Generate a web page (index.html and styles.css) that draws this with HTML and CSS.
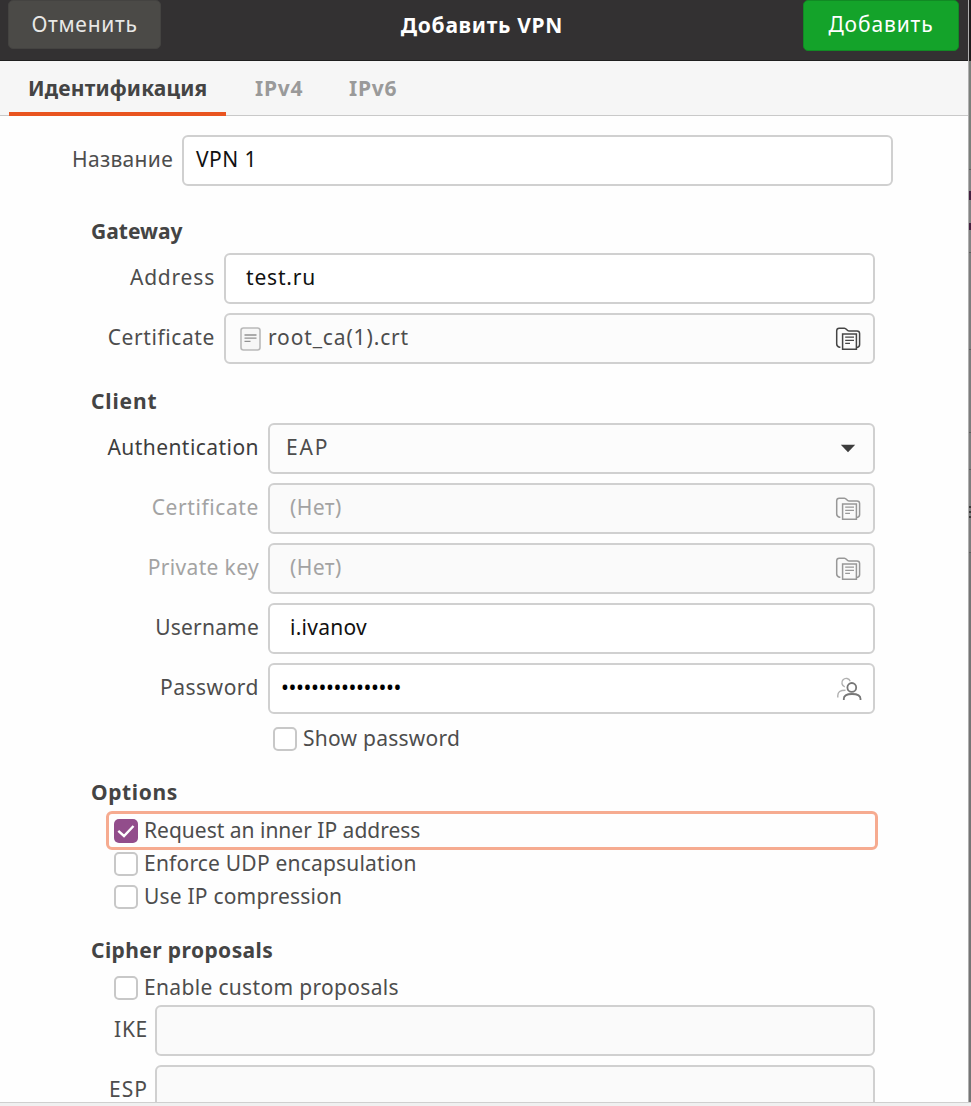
FILE: index.html
```html
<!DOCTYPE html>
<html lang="ru">
<head>
<meta charset="utf-8">
<title>Добавить VPN</title>
<link rel="stylesheet" href="styles.css">
</head>
<body>
<svg class="defs" width="0" height="0">
  <symbol id="folder" viewBox="0 0 26 26" fill="none" stroke="currentColor">
    <path d="M5.4 21.2H4.6C2.6 20.8 1.7 20 1.7 18V4.8C1.7 3 2.6 2.2 4.2 2.2H9.4C11.6 2.2 11.6 5 14 5H22C23.8 5 24.6 5.9 24.6 7.6V18.6C24.6 20.6 23.6 21.4 22 21.6" stroke-width="1.5"/>
    <path d="M7.6 7.9H21.4V23.3H7.6Z" stroke-width="1.5"/>
    <path d="M10.2 11.2H19M10.2 14.3H19M10.2 17.4H15" stroke-width="1.3"/>
  </symbol>
</svg>
<div class="screen">
  <div class="top">
    <div class="dialog">
      <header class="header">
        <div class="btn cancel"><span class="t t-cancel">Отменить</span></div>
        <div class="title"><span class="t b t-title">Добавить VPN</span></div>
        <div class="btn add"><span class="t t-add">Добавить</span></div>
      </header>
      <nav class="tabs">
        <div class="tab active"><span class="t b t-ident">Идентификация</span></div>
        <div class="tab second"><span class="t b t-ip">IPv4</span></div>
        <div class="tab third"><span class="t b t-ip">IPv6</span></div>
      </nav>
      <main class="form">
        <div class="row name"><label><span class="t t-name">Название</span></label><div class="field"><span class="t t-vpn1">VPN 1</span></div></div>
        <h2 class="h-gateway"><span class="t b t-gateway">Gateway</span></h2>
        <section class="group gateway">
          <div class="row"><label><span class="t t-address">Address</span></label><div class="field pad-l"><span class="t t-test">test.ru</span></div></div>
          <div class="row"><label><span class="t t-cert">Certificate</span></label><div class="field button file">
            <svg class="doc" width="21" height="24" viewBox="0 0 21 24" fill="none"><rect x="1" y="1" width="19" height="22" rx="2.5" fill="#f7f7f7" stroke="#b9b9b9" stroke-width="1.6"/><path d="M4.5 8H16.5M4.5 11.2H16.5M4.5 14.4H10.5" stroke="#929292" stroke-width="1.3"/></svg>
            <span class="t t-root">root_ca(1).crt</span><svg class="icon"><use href="#folder"/></svg></div></div>
        </section>
        <h2 class="h-client"><span class="t b t-client">Client</span></h2>
        <section class="group client">
          <div class="row"><label class="dark"><span class="t t-auth">Authentication</span></label><div class="field button combo"><span class="t t-eap">EAP</span><svg class="arrow" width="16" height="9" viewBox="0 0 16 9"><path d="M.8.8H15.2L8 8.3Z" fill="#3d3d3d"/></svg></div></div>
          <div class="row off"><label><span class="t t-cert">Certificate</span></label><div class="field button pad-l"><span class="t t-none">(Нет)</span><svg class="icon"><use href="#folder"/></svg></div></div>
          <div class="row off"><label><span class="t t-key">Private key</span></label><div class="field button pad-l"><span class="t t-none">(Нет)</span><svg class="icon"><use href="#folder"/></svg></div></div>
          <div class="row"><label><span class="t t-user">Username</span></label><div class="field pad-l"><span class="t t-ivanov">i.ivanov</span></div></div>
          <div class="row"><label><span class="t t-pass">Password</span></label><div class="field secret"><span class="t t-dots">••••••••••••••••</span>
            <svg class="people" width="26" height="26" viewBox="0 0 26 26" fill="none"><g stroke="#b0b0b0" stroke-width="1.4"><path d="M14.2 5.2A4.3 4.3 0 1 0 8.8 10.8"/><path d="M1.8 21.5V19.5C1.8 16 4 14.2 9.5 14.2"/></g><g stroke="#777" stroke-width="1.8"><circle cx="15.8" cy="11.4" r="4.4"/><path d="M7.8 24V22.8C7.8 19.5 10.5 18 16 18S24.5 19.5 24.5 22.8V24"/></g></svg></div></div>
        </section>
        <div class="check show"><i class="box"></i><span class="t t-show">Show password</span></div>
        <h2 class="h-options"><span class="t b t-options">Options</span></h2>
        <section class="options">
          <div class="check focus"><i class="box on"><svg width="24" height="24" viewBox="0 0 24 24"><path d="M4.3 11.8L10 17L19.5 7" fill="none" stroke="#fff" stroke-width="2.4"/></svg></i><span class="t t-request">Request an inner IP address</span></div>
          <div class="check"><i class="box"></i><span class="t t-enforce">Enforce UDP encapsulation</span></div>
          <div class="check"><i class="box"></i><span class="t t-compress">Use IP compression</span></div>
        </section>
        <h2 class="h-cipher"><span class="t b t-cipher">Cipher proposals</span></h2>
        <div class="check enable"><i class="box"></i><span class="t t-enable">Enable custom proposals</span></div>
        <section class="group cipher">
          <div class="row"><label><span class="t t-ike">IKE</span></label><div class="field empty"></div></div>
          <div class="row"><label><span class="t t-esp">ESP</span></label><div class="field empty"></div></div>
        </section>
      </main>
    </div>
    <aside class="behind"></aside>
  </div>
  <footer class="footer"></footer>
</div>
</body>
</html>
```
FILE: styles.css
```css
* { box-sizing: border-box; }
body { margin: 0; background: #fff; font-family: "Noto Sans", "Open Sans", sans-serif; font-size: 21px; color: #4d4d4d; }
.defs { position: absolute; }
.screen { width: 971px; height: 1106px; display: flex; flex-direction: column; overflow: hidden; }
.top { height: 1102px; display: flex; overflow: hidden; }
.dialog { width: 968px; flex: none; background: #fefefe; overflow: hidden; }
.footer { height: 4px; background: #f0f0f0; border-top: 1px solid #cfcfcf; }
.t { white-space: pre; line-height: 28px; }
.b { font-weight: 700; }
h2 { margin: 0; font-size: inherit; line-height: 28px; padding-left: 91px; color: #444; display: flex; }

.header { height: 61px; background: #333132; border-bottom: 1px solid #1f1f1f; display: flex; padding: 0 9px 0 8px; justify-content: space-between; color: #fff; }
.btn { border-radius: 5px; display: flex; align-items: center; justify-content: center; }
.btn .t { margin-bottom: 3px; }
.cancel { width: 153px; height: 49px; background: #4b4a47; color: #e8e8e6; border: 1px solid #444341; }
.cancel .t { margin-bottom: 1px; }
.add { width: 156px; height: 51px; background: #14a32a; border: 1px solid #118a24; }
.title { height: 49px; display: flex; align-items: center; }

.tabs { height: 55px; background: #f6f6f6; border-bottom: 1px solid #c9c9c9; display: flex; padding-left: 9px; color: #9a9a9a; }
.tab { height: 55px; padding-top: 13px; display: flex; }
.tab.active { width: 217px; padding-left: 19px; border-bottom: 4px solid #e95420; color: #444; }
.second { padding-left: 29px; width: 94px; }
.third { padding-left: 29px; }

.form { padding-top: 19px; }
.row { display: flex; align-items: center; height: 51px; }
.row .t { margin-bottom: 3px; }
label { display: flex; justify-content: flex-end; padding-right: 9px; flex: none; }
label.dark { color: #3d3d3d; }
.field { flex: 1; height: 51px; border: 2px solid #d0d0d0; border-radius: 6px; background: #fff; color: #111; display: flex; align-items: center; padding-left: 12px; }
.field.pad-l { padding-left: 20px; }
.field.button { background: #fcfcfc; color: #4d4d4d; }
.field.file { padding-left: 14px; }
.field.combo { padding-left: 16px; }
.field.secret { padding-left: 11px; color: #000; }
.name { width: 893px; }
.name label { width: 182px; }
.group { display: flex; flex-direction: column; gap: 9px; width: 875px; }
.gateway label { width: 224px; }
.client label { width: 268px; }
.cipher label { width: 155px; padding-right: 7px; }
.cipher .field, .off .field.button { background: #fafafa; }
.off label, .off .field.button { color: #a3a3a3; }
.doc { margin-right: 7px; }
.icon { width: 26px; height: 26px; margin-left: auto; margin-right: 12px; color: #454545; }
.off .icon { color: #989898; }
.people { margin-left: auto; margin-right: 11px; }
.arrow { margin-left: auto; margin-right: 17px; }
.h-gateway { margin-top: 31px; height: 36px; }
.h-client { margin-top: 23px; height: 36px; }
.h-options { margin-top: 14px; height: 33px; }
.h-cipher { margin-top: 23px; height: 35px; }

.check { display: flex; align-items: center; height: 33px; }
.check .t { margin-bottom: 2px; }
.box { width: 24px; height: 24px; border: 2px solid #c8c8c8; border-radius: 5px; background: #fff; margin-right: 6px; flex: none; }
.box.on { border: 0; background: #924d8b; }
.box svg { display: block; }
.show { padding-left: 273px; height: 50px; }
.options { padding-left: 106px; }
.options .check { padding-left: 8px; }
.options .focus { height: 39px; width: 772px; border: 3px solid #f6ab90; border-radius: 6px; padding-left: 5px; margin-bottom: -3px; }
.enable { padding-left: 114px; height: 34px; }

.behind {
  width: 3px;
  border-left: 1px solid #b0b0b0;
  background: linear-gradient(
    #1d1b1b 61px, #7b7f7b 61px 169px, #5e5e5e 169px 170px, #848484 170px 191px,
    #43213f 191px 200px, #848484 200px 223px, #43213f 223px 230px, #848484 230px 252px,
    #5e5e5e 252px 253px, #7d7d7d 253px 349px, #5e5e5e 349px 350px, #7d7d7d 350px 432px,
    #5e5e5e 432px 433px, #7d7d7d 433px 469px, #5e5e5e 469px 470px, #7d7d7d 470px 506px,
    #3a3a3a 506px 508px, #7d7d7d 508px 511px, #3a3a3a 511px 513px, #7d7d7d 513px 516px,
    #3a3a3a 516px 518px, #7d7d7d 518px 552px, #5e5e5e 552px 553px, #757575 553px);
}

.t-cancel { letter-spacing: .7px; }
.t-title { letter-spacing: .7px; }
.t-add { letter-spacing: .88px; }
.t-ident { letter-spacing: .15px; }
.t-ip { letter-spacing: .75px; }
.t-name { letter-spacing: .3px; }
.t-vpn1 { letter-spacing: .45px; }
.t-address, .t-test { letter-spacing: .8px; }
.t-cert { letter-spacing: .6px; }
.t-root { letter-spacing: .86px; }
.t-client { letter-spacing: .85px; }
.t-auth { letter-spacing: .45px; }
.t-eap { letter-spacing: 1.8px; }
.t-none { letter-spacing: .5px; }
.t-key { letter-spacing: .35px; }
.t-user { letter-spacing: .2px; }
.t-ivanov { letter-spacing: .25px; }
.t-pass { letter-spacing: .5px; }
.t-dots { letter-spacing: -.4px; }
.t-show { letter-spacing: .25px; }
.t-options { letter-spacing: .6px; }
.t-enforce, .t-compress { letter-spacing: .2px; }
.t-cipher { letter-spacing: .4px; }
.t-enable { letter-spacing: .33px; }
.t-ike { letter-spacing: .7px; }
.t-esp { letter-spacing: 1px; }
```
